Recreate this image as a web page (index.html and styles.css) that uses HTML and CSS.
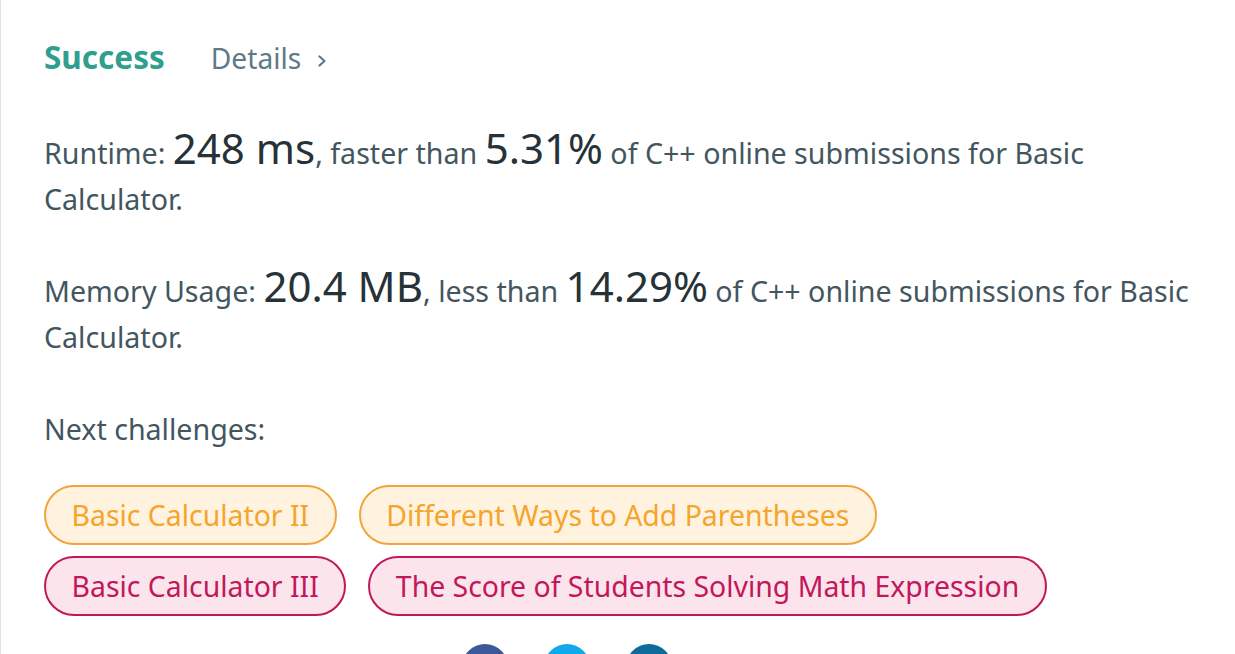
FILE: index.html
```html
<!DOCTYPE html>
<html lang="en">
<head>
<meta charset="utf-8">
<title>Submission result</title>
<link rel="stylesheet" href="styles.css">
</head>
<body>
<main class="panel">
  <header class="result-head">
    <span class="status">Success</span>
    <a class="details" href="#">Details
      <svg class="chev" width="12" height="18" viewBox="0 0 12 18"><path d="M3.5 4.5 L8.5 9 L3.5 13.5" fill="none" stroke="#5f7a87" stroke-width="2.3" stroke-linecap="round" stroke-linejoin="round"/></svg>
    </a>
  </header>

  <p class="stat">Runtime: <span class="big">248 ms</span>, faster than <span class="big">5.31%</span> of C++ online submissions for Basic <span>Calculator.</span></p>
  <p class="stat">Memory Usage: <span class="big">20.4 MB</span>, less than <span class="big">14.29%</span> of C++ online submissions for Basic <span>Calculator.</span></p>
  <p class="stat next">Next challenges:</p>

  <div class="pills">
    <a class="pill medium" href="#">Basic Calculator II</a>
    <a class="pill medium" href="#">Different Ways to Add Parentheses</a>
    <a class="pill hard" href="#">Basic Calculator III</a>
    <a class="pill hard" href="#">The Score of Students Solving Math Expression</a>
  </div>

  <div class="share">
    <span class="circle fb">
      <svg width="46" height="46" viewBox="0 0 46 46"><path d="M25.5 36V24.5h3.6l.6-4.2h-4.2v-2.7c0-1.2.4-2.1 2.1-2.1h2.2v-3.7c-.4-.1-1.7-.2-3.2-.2-3.2 0-5.3 1.9-5.3 5.5v3.2h-3.6v4.2h3.6V36z" fill="#fff"/></svg>
    </span>
    <span class="circle tw">
      <svg width="46" height="46" viewBox="0 0 46 46"><path d="M34 16.5c-.8.4-1.7.6-2.6.7.9-.6 1.6-1.4 2-2.5-.9.5-1.9.9-2.9 1.1a4.5 4.5 0 0 0-7.7 4.1c-3.7-.2-7-2-9.3-4.7-1.2 2.1-.6 4.6 1.4 6-.7 0-1.4-.2-2-.6 0 2.2 1.6 4 3.6 4.5-.7.2-1.4.2-2 .1.6 1.8 2.3 3.1 4.2 3.1a9 9 0 0 1-6.7 1.9 12.8 12.8 0 0 0 19.7-11.4c.9-.6 1.6-1.4 2.3-2.3z" fill="#fff"/></svg>
    </span>
    <span class="circle li">
      <svg width="46" height="46" viewBox="0 0 46 46"><rect x="14" y="19" width="3.6" height="12" fill="#fff"/><circle cx="15.8" cy="15" r="2.1" fill="#fff"/><path d="M20.5 19h3.4v1.7c.5-.9 1.7-2 3.6-2 3.7 0 4.4 2.4 4.4 5.6V31h-3.6v-5.9c0-1.4 0-3.2-2-3.2s-2.2 1.5-2.2 3.1v6h-3.6z" fill="#fff"/></svg>
    </span>
  </div>
</main>
</body>
</html>
```
FILE: styles.css
```css
* { box-sizing: border-box; }

html, body {
  margin: 0;
  padding: 0;
  background: #ffffff;
}

body {
  font-family: "Noto Sans", "Open Sans", sans-serif;
  color: #455a64;
  overflow: hidden;
}

.panel {
  height: 100vh;
  overflow: hidden;
  border-left: 1px solid #e3e3e3;
  padding: 37px 40px 0 43px;
}

.result-head {
  display: flex;
  align-items: baseline;
  gap: 46px;
  line-height: 40px;
  margin-bottom: 49px;
}

.status {
  font-size: 31.5px;
  font-weight: 700;
  color: #2f9f8e;
}

.details {
  font-size: 28.2px;
  color: #5f7a87;
  text-decoration: none;
  display: inline-flex;
  align-items: center;
  gap: 15px;
}

.chev {
  position: relative;
  top: 3px;
}

.stat {
  margin: 0 0 43px;
  font-size: 28.6px;
  line-height: 46px;
  color: #435660;
}

.stat.next {
  padding-top: 3px;
  margin-bottom: 33px;
}

.big {
  font-size: 42px;
  line-height: 1;
  color: #263238;
}

.pills {
  display: flex;
  flex-wrap: wrap;
  column-gap: 22px;
  row-gap: 11px;
}

.pill {
  display: inline-block;
  height: 60px;
  line-height: 56px;
  padding: 0 25.5px;
  border: 2px solid;
  border-radius: 30px;
  font-size: 28.4px;
  text-decoration: none;
  white-space: nowrap;
}

.pill.medium {
  color: #f5a42c;
  border-color: #f2a43a;
  background: #fff3e0;
}

.pill.hard {
  color: #c2185b;
  border-color: #c2185b;
  background: #fce4ec;
}

.share {
  display: flex;
  gap: 36px;
  margin-top: 28px;
  padding-left: 418px;
}

.circle {
  width: 46px;
  height: 46px;
  border-radius: 50%;
  display: block;
  flex: none;
}

.circle svg { display: block; }

.fb { background: #3b5998; }
.tw { background: #12a9ec; }
.li { background: #0c6b9b; }
```
